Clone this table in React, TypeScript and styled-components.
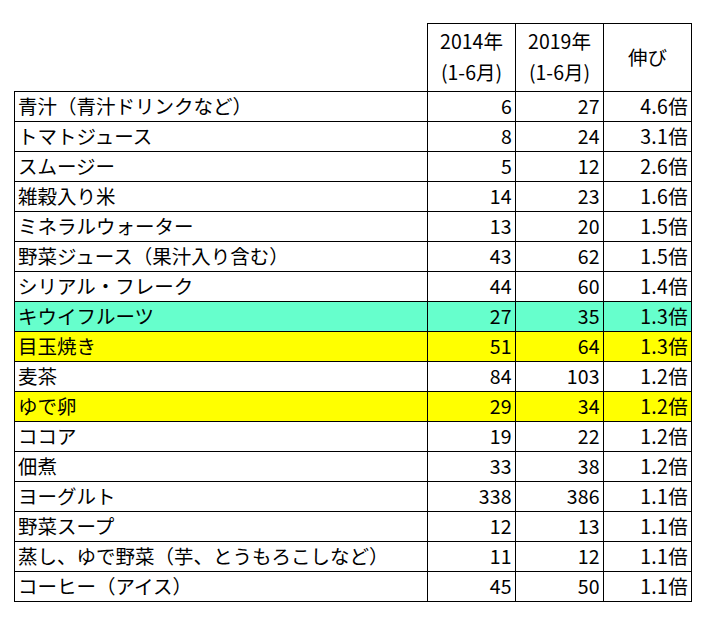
import React from 'react';
import styled, { createGlobalStyle } from 'styled-components';

const GlobalStyle = createGlobalStyle`
  html, body {
    margin: 0;
    padding: 0;
    background: #ffffff;
  }
  body {
    font-family: "Noto Sans CJK JP", "Noto Sans", sans-serif;
    color: #000000;
  }
`;

const Page = styled.div`
  padding: 23px 0 0 14px;
`;

const Table = styled.table`
  border-collapse: collapse;
  table-layout: fixed;
  width: 678px;
  font-size: 19.5px;
  line-height: 1.2;
`;

const HeadCell = styled.th<{ blank?: boolean }>`
  font-weight: normal;
  height: 64px;
  padding: 0 0 3px;
  text-align: center;
  vertical-align: middle;
  line-height: 31px;
  border: 1px solid #000;
  border-top: ${(p) => (p.blank ? 'none' : '1px solid #000')};
  border-left: ${(p) => (p.blank ? 'none' : '1px solid #000')};
`;

const Row = styled.tr<{ tint?: string }>`
  height: 30px;
  background: ${(p) => p.tint || 'transparent'};
`;

const Label = styled.td`
  border: 1px solid #000;
  padding: 0 0 1px 3px;
  text-align: left;
  white-space: nowrap;
`;

const Num = styled.td`
  border: 1px solid #000;
  padding: 0 3px 1px 0;
  text-align: right;
  white-space: nowrap;
  letter-spacing: 0.3px;
`;

type Item = { name: string; a: number; b: number; ratio: string; tint?: string };

const TEAL = '#66ffcc';
const YELLOW = '#ffff00';

const items: Item[] = [
  { name: '青汁（青汁ドリンクなど）', a: 6, b: 27, ratio: '4.6' },
  { name: 'トマトジュース', a: 8, b: 24, ratio: '3.1' },
  { name: 'スムージー', a: 5, b: 12, ratio: '2.6' },
  { name: '雑穀入り米', a: 14, b: 23, ratio: '1.6' },
  { name: 'ミネラルウォーター', a: 13, b: 20, ratio: '1.5' },
  { name: '野菜ジュース（果汁入り含む）', a: 43, b: 62, ratio: '1.5' },
  { name: 'シリアル・フレーク', a: 44, b: 60, ratio: '1.4' },
  { name: 'キウイフルーツ', a: 27, b: 35, ratio: '1.3', tint: TEAL },
  { name: '目玉焼き', a: 51, b: 64, ratio: '1.3', tint: YELLOW },
  { name: '麦茶', a: 84, b: 103, ratio: '1.2' },
  { name: 'ゆで卵', a: 29, b: 34, ratio: '1.2', tint: YELLOW },
  { name: 'ココア', a: 19, b: 22, ratio: '1.2' },
  { name: '佃煮', a: 33, b: 38, ratio: '1.2' },
  { name: 'ヨーグルト', a: 338, b: 386, ratio: '1.1' },
  { name: '野菜スープ', a: 12, b: 13, ratio: '1.1' },
  { name: '蒸し、ゆで野菜（芋、とうもろこしなど）', a: 11, b: 12, ratio: '1.1' },
  { name: 'コーヒー（アイス）', a: 45, b: 50, ratio: '1.1' },
];

export default function App() {
  return (
    <Page>
      <GlobalStyle />
      <Table>
        <colgroup>
          <col style={{ width: 413 }} />
          <col style={{ width: 88 }} />
          <col style={{ width: 88 }} />
          <col style={{ width: 88 }} />
        </colgroup>
        <thead>
          <tr>
            <HeadCell blank />
            <HeadCell>
              2014年
              <br />
              (1-6月)
            </HeadCell>
            <HeadCell>
              2019年
              <br />
              (1-6月)
            </HeadCell>
            <HeadCell>伸び</HeadCell>
          </tr>
        </thead>
        <tbody>
          {items.map((it) => (
            <Row key={it.name} tint={it.tint}>
              <Label>{it.name}</Label>
              <Num>{it.a}</Num>
              <Num>{it.b}</Num>
              <Num>{it.ratio}倍</Num>
            </Row>
          ))}
        </tbody>
      </Table>
    </Page>
  );
}
